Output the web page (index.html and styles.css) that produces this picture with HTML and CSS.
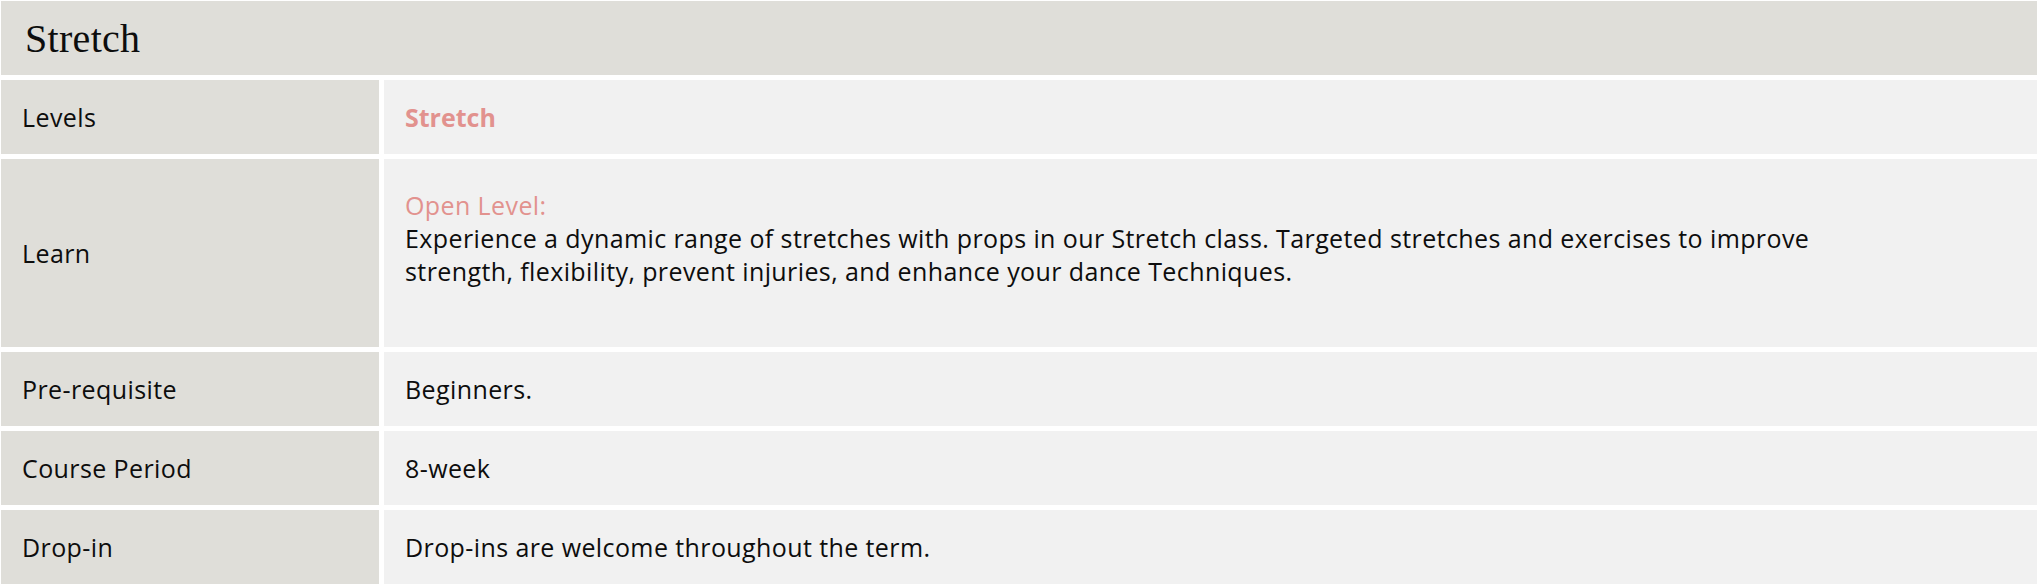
FILE: index.html
```html
<!DOCTYPE html>
<html lang="en">
<head>
<meta charset="utf-8">
<title>Stretch</title>
<link rel="stylesheet" href="styles.css">
</head>
<body>
<div class="course">
  <div class="course-title">Stretch</div>
  <div class="label">Levels</div>
  <div class="value"><span class="level-name">Stretch</span></div>
  <div class="label">Learn</div>
  <div class="value value-top">
    <p class="desc"><span class="accent">Open Level:</span><br>Experience a dynamic range of stretches with props in our Stretch class. Targeted stretches and exercises to improve<br>strength, flexibility, prevent injuries, and enhance your dance Techniques.</p>
  </div>
  <div class="label">Pre-requisite</div>
  <div class="value">Beginners.</div>
  <div class="label">Course Period</div>
  <div class="value">8-week</div>
  <div class="label">Drop-in</div>
  <div class="value">Drop-ins are welcome throughout the term.</div>
</div>
</body>
</html>
```
FILE: styles.css
```css
html, body {
  margin: 0;
  padding: 0;
  background: #ffffff;
}
body {
  font-family: "Open Sans", "Noto Sans", sans-serif;
  font-size: 25px;
  letter-spacing: 0.4px;
  color: #0d0d0d;
}
.course {
  display: grid;
  grid-template-columns: 378px 1fr;
  grid-template-rows: 74px 74px 188px 74px 74px 74px;
  gap: 5px;
  width: 2036px;
  margin: 1px 0 0 1px;
}
.course-title {
  grid-column: 1 / span 2;
  background: #dfded9;
  font-family: "Liberation Serif", "DejaVu Serif", serif;
  font-size: 40px;
  letter-spacing: 0.3px;
  display: flex;
  align-items: center;
  padding-left: 24px;
  color: #0d0d0d;
}
.label {
  background: #dfded9;
  display: flex;
  align-items: center;
  padding-left: 21px;
}
.value {
  background: #f1f1f1;
  display: flex;
  align-items: center;
  padding-left: 21px;
}
.value-top {
  align-items: flex-start;
  padding-top: 30px;
}
.desc {
  margin: 0;
  line-height: 33px;
}
.level-name {
  color: #e2928e;
  font-weight: 700;
  letter-spacing: 0;
}
.accent {
  color: #e2928e;
}
```
